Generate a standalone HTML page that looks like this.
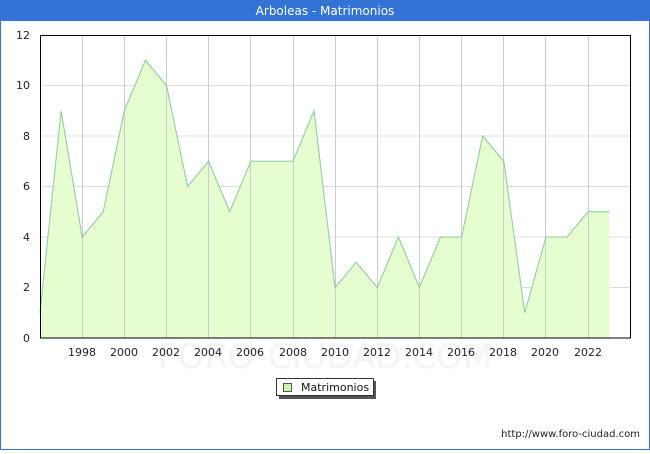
<!DOCTYPE html>
<html><head><meta charset="utf-8"><style>
body{margin:0;width:650px;height:450px;overflow:hidden;background:#fff;font-family:"DejaVu Sans","Liberation Sans",sans-serif}
</style></head><body>
<svg width="650" height="450" xmlns="http://www.w3.org/2000/svg" font-family="DejaVu Sans, Liberation Sans, sans-serif">
<rect x="0.5" y="0.5" width="649" height="449" fill="#fff" stroke="#3273d5"/>
<rect x="0" y="0" width="650" height="21" fill="#3273d5"/>
<text x="325" y="15" fill="#fff" font-size="12" text-anchor="middle">Arboleas - Matrimonios</text>
<text x="325" y="368" fill="#f3f4fb" font-size="34" text-anchor="middle">FORO-CIUDAD.COM</text>
<g stroke="#dcdcdc" stroke-width="1">
<line x1="40" y1="287.5" x2="630" y2="287.5"/><line x1="40" y1="237" x2="630" y2="237"/><line x1="40" y1="186.5" x2="630" y2="186.5"/><line x1="40" y1="136" x2="630" y2="136"/><line x1="40" y1="85.5" x2="630" y2="85.5"/>
</g>
<polygon fill="#e5fdcf" points="40,338 40,312.75 61.1,110.75 82.2,237 103.2,211.75 124.3,110.75 145.4,60.25 166.5,85.5 187.6,186.5 208.6,161.25 229.7,211.75 250.8,161.25 271.9,161.25 293,161.25 314,110.75 335.1,287.5 356.2,262.25 377.3,287.5 398.4,237 419.4,287.5 440.5,237 461.6,237 482.7,136 503.8,161.25 524.8,312.75 545.9,237 567,237 588.1,211.75 609.2,211.75 609.2,338"/>
<g stroke="#cccccc" stroke-width="1">
<line x1="82.5" y1="35" x2="82.5" y2="338"/><line x1="124.5" y1="35" x2="124.5" y2="338"/><line x1="166.5" y1="35" x2="166.5" y2="338"/><line x1="208.5" y1="35" x2="208.5" y2="338"/><line x1="250.5" y1="35" x2="250.5" y2="338"/><line x1="293.5" y1="35" x2="293.5" y2="338"/><line x1="335.5" y1="35" x2="335.5" y2="338"/><line x1="377.5" y1="35" x2="377.5" y2="338"/><line x1="419.5" y1="35" x2="419.5" y2="338"/><line x1="461.5" y1="35" x2="461.5" y2="338"/><line x1="503.5" y1="35" x2="503.5" y2="338"/><line x1="545.5" y1="35" x2="545.5" y2="338"/><line x1="588.5" y1="35" x2="588.5" y2="338"/>
</g>
<polyline fill="none" stroke="#8cc8a0" stroke-width="1" points="40,312.75 61.1,110.75 82.2,237 103.2,211.75 124.3,110.75 145.4,60.25 166.5,85.5 187.6,186.5 208.6,161.25 229.7,211.75 250.8,161.25 271.9,161.25 293,161.25 314,110.75 335.1,287.5 356.2,262.25 377.3,287.5 398.4,237 419.4,287.5 440.5,237 461.6,237 482.7,136 503.8,161.25 524.8,312.75 545.9,237 567,237 588.1,211.75 609.2,211.75"/>
<rect x="40.5" y="35.5" width="590" height="302.5" fill="none" stroke="#000"/>
<g font-size="11" fill="#222" text-anchor="end">
<text x="30" y="39">12</text><text x="30" y="89">10</text><text x="30" y="140">8</text><text x="30" y="190">6</text><text x="30" y="241">4</text><text x="30" y="291">2</text><text x="30" y="342">0</text>
</g>
<g font-size="11" fill="#222" text-anchor="middle">
<text x="82" y="356">1998</text><text x="124" y="356">2000</text><text x="166" y="356">2002</text><text x="208" y="356">2004</text><text x="250" y="356">2006</text><text x="293" y="356">2008</text><text x="335" y="356">2010</text><text x="377" y="356">2012</text><text x="419" y="356">2014</text><text x="461" y="356">2016</text><text x="503" y="356">2018</text><text x="545" y="356">2020</text><text x="588" y="356">2022</text>
</g>
<rect x="279" y="381" width="97" height="18" fill="#555"/>
<rect x="276.5" y="378.5" width="97" height="17" fill="#fff" stroke="#333"/>
<rect x="283.5" y="383.5" width="8" height="8" fill="#ccf5a8" stroke="#555"/>
<text x="301" y="391" font-size="11" fill="#111">Matrimonios</text>
<text x="640" y="437" font-size="10" fill="#222" text-anchor="end">http://www.foro-ciudad.com</text>
</svg>
</body></html>
